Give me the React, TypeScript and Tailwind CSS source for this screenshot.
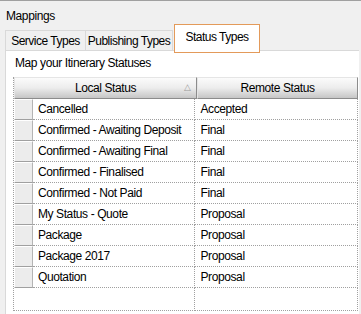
import React from "react";

const rows = [
	["Cancelled", "Accepted"],
	["Confirmed - Awaiting Deposit", "Final"],
	["Confirmed - Awaiting Final", "Final"],
	["Confirmed - Finalised", "Final"],
	["Confirmed - Not Paid", "Final"],
	["My Status - Quote", "Proposal"],
	["Package", "Proposal"],
	["Package 2017", "Proposal"],
	["Quotation", "Proposal"],
];

const App = () => {
	return (
		<main
			className="w-[361px] h-[314px] overflow-hidden bg-[#f0f0f0] border-t border-[#a0a0a0] text-[12px] tracking-[-0.4px] text-black"
			style={{ fontFamily: '"Liberation Sans", Arial, sans-serif' }}
		>
			{/* Group title */}
			<div className="pl-[6px] pt-[8px] h-[23px] leading-[14px]">Mappings</div>

			{/* Tabs */}
			<div className="relative flex items-end h-[26px] pl-[5px] tracking-[-0.5px]">
				<div className="w-[81px] h-[20px] flex items-center justify-center border border-b-0 border-[#d9d9d9] bg-[#f0f0f0]">
					Service Types
				</div>
				<div className="w-[87px] h-[20px] flex items-center justify-center border border-b-0 border-l-0 border-[#d9d9d9] bg-[#f0f0f0]">
					Publishing Types
				</div>
				<div className="relative z-10 -mb-[3px] ml-[1px] h-[29px] w-[86px] flex items-center justify-center pb-[4px] border border-[#e39a5a] bg-white">
					Status Types
				</div>
			</div>

			{/* Tab body */}
			<section className="ml-[5px] mr-[2px] h-[266px] bg-white border-l border-t border-[#d9d9d9]">
				<div className="pl-[9px] pt-[5px] h-[26px] leading-[14px]">Map your Itinerary Statuses</div>

				<div className="ml-[7px] w-[345px] border-l border-[#a0a0a0] border-dotted">
					{/* Column headers */}
					<div className="flex h-[22px]">
						<div className="relative w-[183px] flex items-center justify-center bg-gradient-to-b from-[#fbfbfb] via-[#ececec] to-[#c6c6c6] border border-[#8c8c8c] border-t-[#e5e5e5] border-l-[#e5e5e5]">
							Local Status
							<span className="absolute right-[5px] top-[3px] text-[9px] text-[#9a9a9a]">△</span>
						</div>
						<div className="w-[161px] flex items-center justify-center bg-gradient-to-b from-[#fbfbfb] via-[#ececec] to-[#c6c6c6] border border-[#8c8c8c] border-t-[#e5e5e5] border-l-[#e5e5e5]">
							Remote Status
						</div>
					</div>

					{/* Rows */}
					{rows.map(([local, remote]) => (
						<div key={local} className="flex h-[21px]">
							<div className="w-[19px] bg-[#ececec] border-t border-l border-white border-b border-r border-b-[#a0a0a0] border-r-[#b4b4b4]" />
							<div className="w-[163px] pl-[5px] flex items-center border-b border-r border-dotted border-[#a0a0a0] whitespace-nowrap overflow-hidden">
								{local}
							</div>
							<div className="w-[163px] pl-[5px] flex items-center border-b border-r border-dotted border-[#a0a0a0] whitespace-nowrap">
								{remote}
							</div>
						</div>
					))}

					{/* New row */}
					<div className="flex h-[23px]">
						<div className="w-[182px] border-b border-r border-dotted border-[#a0a0a0]" />
						<div className="w-[163px] border-b border-r border-dotted border-[#a0a0a0]" />
					</div>
				</div>
			</section>
		</main>
	);
};

export default App;
